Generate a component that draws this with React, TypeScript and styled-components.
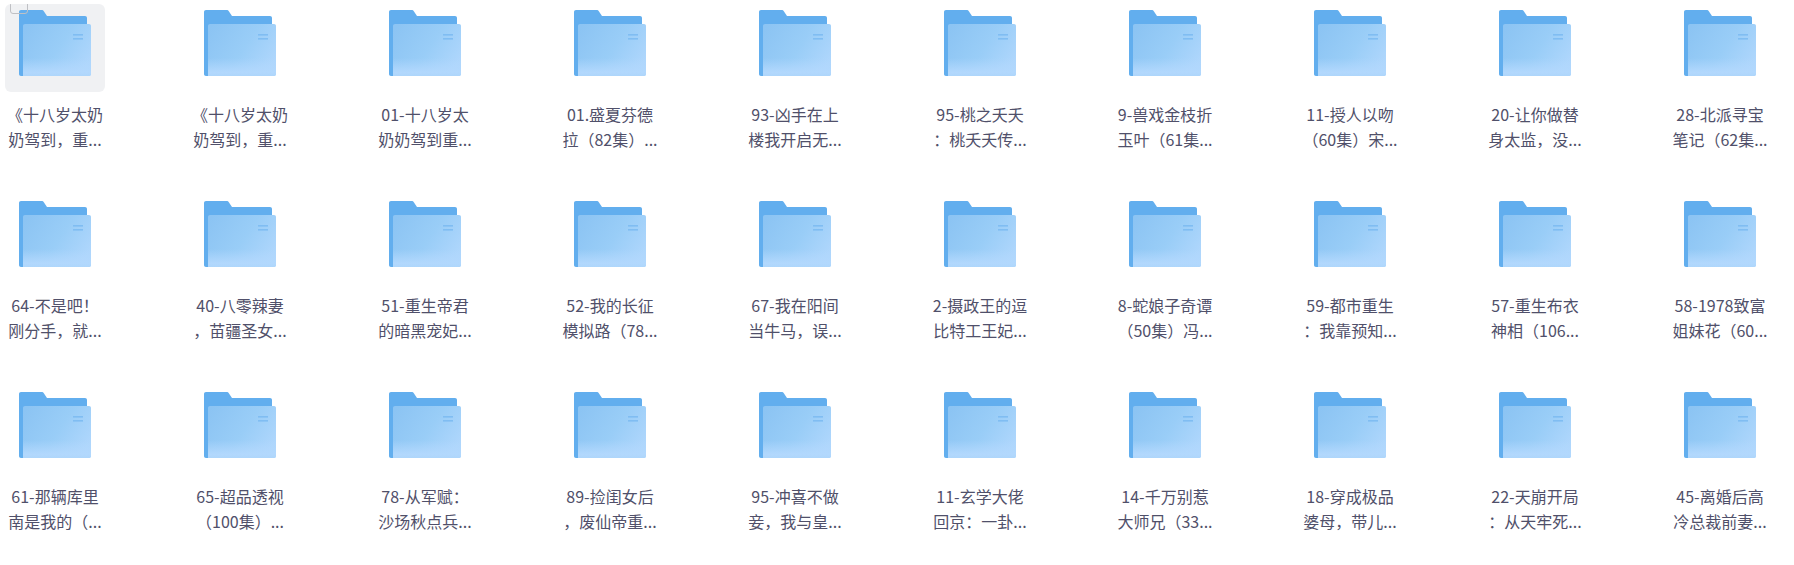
import * as React from 'react';
import styled, { createGlobalStyle } from 'styled-components';

const folders: [string, string][] = [
  ['《十八岁太奶', '奶驾到，重...'],
  ['《十八岁太奶', '奶驾到，重...'],
  ['01-十八岁太', '奶奶驾到重...'],
  ['01.盛夏芬德', '拉（82集）...'],
  ['93-凶手在上', '楼我开启无...'],
  ['95-桃之夭夭', '：桃夭夭传...'],
  ['9-兽戏金枝折', '玉叶（61集...'],
  ['11-授人以吻', '（60集）宋...'],
  ['20-让你做替', '身太监，没...'],
  ['28-北派寻宝', '笔记（62集...'],
  ['64-不是吧！', '刚分手，就...'],
  ['40-八零辣妻', '，苗疆圣女...'],
  ['51-重生帝君', '的暗黑宠妃...'],
  ['52-我的长征', '模拟路（78...'],
  ['67-我在阳间', '当牛马，误...'],
  ['2-摄政王的逗', '比特工王妃...'],
  ['8-蛇娘子奇谭', '（50集）冯...'],
  ['59-都市重生', '：我靠预知...'],
  ['57-重生布衣', '神相（106...'],
  ['58-1978致富', '姐妹花（60...'],
  ['61-那辆库里', '南是我的（...'],
  ['65-超品透视', '（100集）...'],
  ['78-从军赋：', '沙场秋点兵...'],
  ['89-捡闺女后', '，废仙帝重...'],
  ['95-冲喜不做', '妾，我与皇...'],
  ['11-玄学大佬', '回京：一卦...'],
  ['14-千万别惹', '大师兄（33...'],
  ['18-穿成极品', '婆母，带儿...'],
  ['22-天崩开局', '：从天牢死...'],
  ['45-离婚后高', '冷总裁前妻...'],
];

const FolderIcon: React.FC = () => {
  const id = React.useId();
  return (
    <FolderSvg viewBox="0 0 72 66">
      <defs>
        <linearGradient id={`${id}front`} x1="0" y1="0.15" x2="1" y2="0.65">
          <stop offset="0" stopColor="#8cc4f3" />
          <stop offset="0.55" stopColor="#99cdf7" />
          <stop offset="1" stopColor="#aed6fc" />
        </linearGradient>
        <linearGradient id={`${id}band`} x1="0" y1="0" x2="0" y2="1">
          <stop offset="0" stopColor="#b2d8fd" stopOpacity="0" />
          <stop offset="0.8" stopColor="#b2d8fd" />
          <stop offset="1" stopColor="#aed6fb" />
        </linearGradient>
      </defs>
      <path
        d="M2 0H22.5C23.6 0 24.4.5 25 1.4L28 6H66C67.2 6 68 6.8 68 8V20H6V66H2C.8 66 0 65.2 0 64V2C0 .8.8 0 2 0Z"
        fill="#62aeee"
      />
      <path
        d="M6 14H70C71.2 14 72 14.8 72 16V64C72 65.2 71.2 66 70 66H4V16C4 14.8 4.8 14 6 14Z"
        fill={`url(#${id}front)`}
      />
      <path
        d="M4 48H72V64C72 65.2 71.2 66 70 66H4Z"
        fill={`url(#${id}band)`}
      />
      <rect x="54" y="24" width="10" height="1.6" fill="#80bdf2" />
      <rect x="54" y="28" width="10" height="1.6" fill="#80bdf2" />
    </FolderSvg>
  );
};

export default function App() {
  return (
    <>
      <GlobalStyle />
      <FolderGrid>
        {folders.map(([first, second], index) => (
          <FolderItem key={index}>
            <Thumb $active={index === 0}>
              {index === 0 && <Checkbox />}
              <FolderIcon />
            </Thumb>
            <Title>
              <TitleLine>{first}</TitleLine>
              <TitleLine>{second}</TitleLine>
            </Title>
          </FolderItem>
        ))}
      </FolderGrid>
    </>
  );
}

const GlobalStyle = createGlobalStyle`
  html, body {
    margin: 0;
    padding: 0;
    background: #fff;
    overflow: hidden;
  }
  body {
    font-family: "Noto Sans CJK SC", "Liberation Sans", sans-serif;
  }
`;

const FolderGrid = styled.div`
  display: grid;
  grid-template-columns: repeat(10, 100px);
  grid-auto-rows: 191px;
  column-gap: 85px;
  padding: 4px 0 0 5px;
`;

const FolderItem = styled.div`
  display: flex;
  flex-direction: column;
  width: 100px;
`;

const Thumb = styled.div<{ $active: boolean }>`
  position: relative;
  display: flex;
  justify-content: center;
  box-sizing: border-box;
  height: 88px;
  padding-top: 6px;
  overflow: hidden;
  border-radius: 6px;
  background: ${(p) => (p.$active ? '#f0f1f3' : 'transparent')};
`;

const Checkbox = styled.span`
  position: absolute;
  top: -8px;
  left: 5px;
  box-sizing: border-box;
  width: 18px;
  height: 18px;
  border: 1px solid #bfc0c4;
  border-radius: 3px;
`;

const FolderSvg = styled.svg`
  display: block;
  width: 72px;
  height: 66px;
`;

const Title = styled.div`
  margin-top: 10px;
  padding: 0 2px;
  color: #50506a;
  font-size: 16px;
  line-height: 25px;
  text-align: center;
`;

const TitleLine = styled.div`
  white-space: nowrap;
`;
